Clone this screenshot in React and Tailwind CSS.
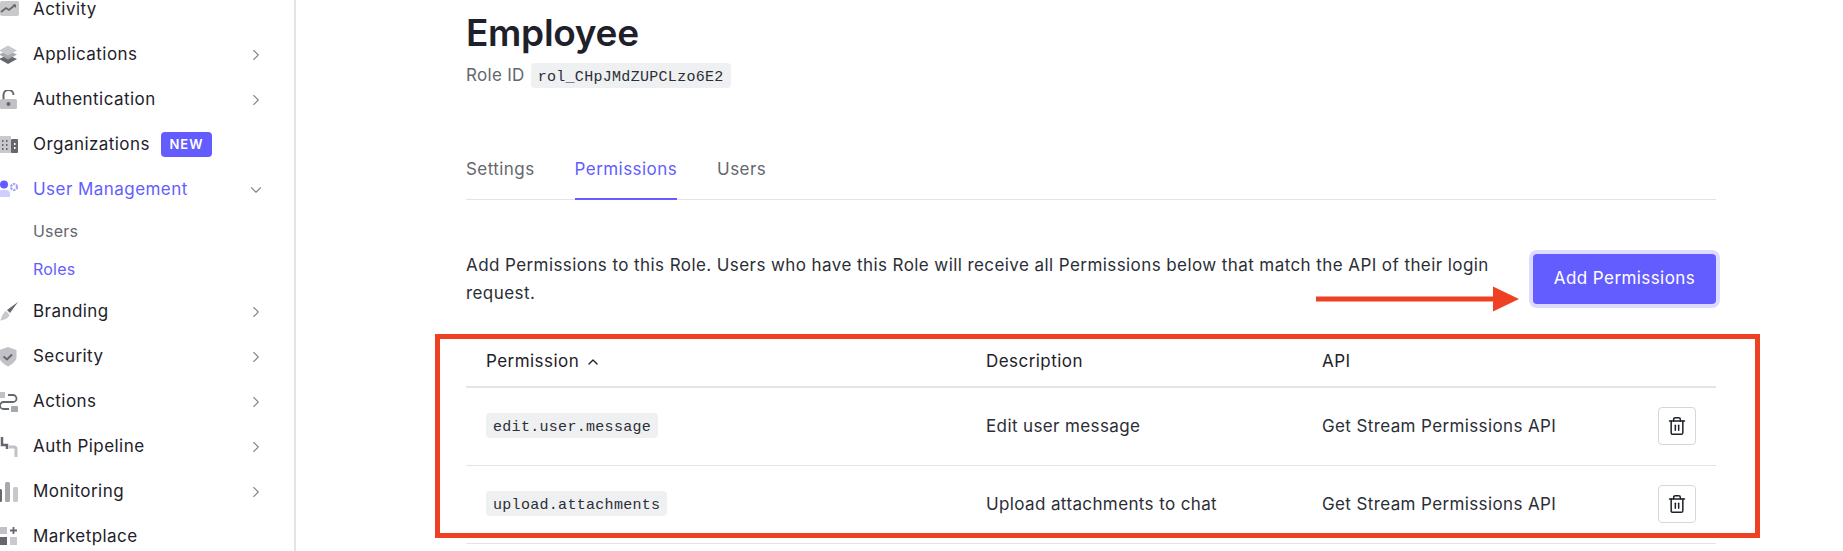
import React from "react";
import { ChevronRight, ChevronDown, ChevronUp, Trash2 } from "lucide-react";

const ActivityIcon = () => (
  <svg width="20" height="20" viewBox="0 0 20 20">
    <rect x="0" y="1" width="19" height="15" rx="2" fill="#c9c9cc" />
    <path d="M1 12l5-4 3 2 6-5" fill="none" stroke="#65676e" strokeWidth="1.8" />
    <path d="M12.5 4.500h3.500v3.500z" fill="#65676e" />
  </svg>
);
const AppsIcon = () => (
  <svg width="20" height="20" viewBox="0 0 20 20">
    <path d="M-1 14l9-4 9 4-9 5z" fill="#65676e" />
    <path d="M-1 9.500l9-4 9 4-9 5z" fill="#a8a9ad" />
    <path d="M-1 5.500l9-5 9 5-9 5z" fill="#c9c9cc" />
  </svg>
);
const LockIcon = () => (
  <svg width="20" height="20" viewBox="0 0 20 20">
    <path d="M3.500 9V5a5 5 0 0 1 10 0" fill="none" stroke="#65676e" strokeWidth="2" />
    <rect x="0" y="9" width="17" height="10" rx="1.500" fill="#c2c2c6" />
    <circle cx="8.500" cy="14" r="2" fill="#65676e" />
  </svg>
);
const OrgIcon = () => (
  <svg width="20" height="20" viewBox="0 0 20 20">
    <rect x="0" y="1" width="11" height="17" fill="#c9c9cc" />
    <rect x="11" y="4" width="7" height="14" rx="1" fill="#65676e" />
    <path d="M2 5h1.500v2H2zM6 5h1.500v2H6zM2 9h1.500v2H2zM6 9h1.500v2H6zM2 13h1.500v2H2zM6 13h1.500v2H6z" fill="#65676e" />
    <path d="M14 8h1.500v2H14zM14 12h1.500v2H14z" fill="#fff" />
  </svg>
);
const UserMgmtIcon = () => (
  <svg width="20" height="20" viewBox="0 0 20 20">
    <circle cx="4" cy="4.500" r="4" fill="#635dff" />
    <path d="M-2 17v-3a4 4 0 0 1 4-4h4a4 4 0 0 1 4 4v3z" fill="#cfcdff" />
    <circle cx="14" cy="7" r="3" fill="none" stroke="#a09dff" strokeWidth="2.200" strokeDasharray="2.200 1" />
  </svg>
);
const BrushIcon = () => (
  <svg width="20" height="20" viewBox="0 0 20 20">
    <path d="M18 0L7 8l3 3z" fill="#65676e" />
    <path d="M6 9l3.500 3.500C9 16 5 18 0 18.500c2-2 1-6 6-9.500z" fill="#c9c9cc" />
  </svg>
);
const ShieldIcon = () => (
  <svg width="20" height="20" viewBox="0 0 20 20">
    <path d="M8 0l8.500 3v7c0 4-4 7-8.500 9.500C3.500 17-.5 14-.5 10V3z" fill="#c2c2c6" />
    <path d="M3.500 9.500l3.500 3 5-5" fill="none" stroke="#65676e" strokeWidth="2" />
  </svg>
);
const ActionsIcon = () => (
  <svg width="20" height="20" viewBox="0 0 20 20">
    <rect x="-1" y="0" width="6" height="6" fill="#c2c2c6" />
    <rect x="11" y="14" width="7" height="7" rx="1" fill="#a8a9ad" />
    <path d="M8 3h5a3.500 3.500 0 0 1 0 7H3.500a3.500 3.500 0 0 0 0 7H9" fill="none" stroke="#65676e" strokeWidth="1.800" />
  </svg>
);
const PipelineIcon = () => (
  <svg width="20" height="20" viewBox="0 0 20 20">
    <path d="M2 0v8h5v4" fill="none" stroke="#65676e" strokeWidth="2.500" />
    <path d="M9 10h5a2 2 0 0 1 2 2v8" fill="none" stroke="#c2c2c6" strokeWidth="3" />
  </svg>
);
const ChartIcon = () => (
  <svg width="20" height="20" viewBox="0 0 20 20">
    <rect x="-1" y="7" width="3" height="13" rx="1.500" fill="#65676e" />
    <rect x="5" y="0" width="5" height="20" rx="1.500" fill="#a8a9ad" />
    <rect x="13" y="5" width="5" height="15" rx="1.500" fill="#c9c9cc" />
  </svg>
);
const MarketIcon = () => (
  <svg width="20" height="20" viewBox="0 0 20 20">
    <rect x="0" y="0" width="7" height="7" fill="#c2c2c6" />
    <rect x="0" y="10" width="7" height="8" fill="#65676e" />
    <rect x="10" y="10" width="7" height="8" fill="#c9c9cc" />
    <path d="M13.500 0v7M10 3.500h7" stroke="#65676e" strokeWidth="1.800" />
  </svg>
);

const NavItem = ({ icon, label, chevron = true, badge, active }) => (
  <div className="flex h-[45px] items-center">
    <div className="flex w-[33px] shrink-0 items-center">{icon}</div>
    <span className={`text-[17px] font-[420] tracking-[0.45px] ${active ? "text-[#635dff]" : "text-[#1e212a]"}`}>
      {label}
    </span>
    {badge && (
      <span className="ml-[11px] flex h-[25px] w-[51px] items-center justify-center rounded-[4px] bg-[#635dff] text-[13px] font-semibold tracking-[1px] text-white">
        {badge}
      </span>
    )}
    {chevron && (
      <span className="ml-auto mr-[29px] text-[#85878c]">
        {active ? <ChevronDown size={18} strokeWidth={1.5} /> : <ChevronRight size={18} strokeWidth={1.5} />}
      </span>
    )}
  </div>
);

const Sidebar = () => (
  <aside className="h-[551px] w-[296px] shrink-0 overflow-hidden border-r-2 border-[#e3e4e6]">
    <div className="-mt-[13px]">
      <NavItem icon={<ActivityIcon />} label="Activity" chevron={false} />
      <NavItem icon={<AppsIcon />} label="Applications" />
      <NavItem icon={<LockIcon />} label="Authentication" />
      <NavItem icon={<OrgIcon />} label="Organizations" chevron={false} badge="NEW" />
      <NavItem icon={<UserMgmtIcon />} label="User Management" active />
      <div className="pb-[1px] pl-[33px] text-[16px] tracking-[0.2px]">
        <div className="flex h-[38px] items-center text-[#65676e]">Users</div>
        <div className="flex h-[38px] items-center text-[#635dff]">Roles</div>
      </div>
      <NavItem icon={<BrushIcon />} label="Branding" />
      <NavItem icon={<ShieldIcon />} label="Security" />
      <NavItem icon={<ActionsIcon />} label="Actions" />
      <NavItem icon={<PipelineIcon />} label="Auth Pipeline" />
      <NavItem icon={<ChartIcon />} label="Monitoring" />
      <NavItem icon={<MarketIcon />} label="Marketplace" chevron={false} />
    </div>
  </aside>
);

const Code = ({ children }) => (
  <code className="inline-block rounded-[4px] bg-[#eff0f2] px-[7px] pt-[5px] pb-[1px] font-['Liberation_Mono',monospace] text-[15px] leading-[19px] tracking-[0.3px] text-[#2b2e36]">
    {children}
  </code>
);

const Row = ({ name, desc }) => (
  <div className="flex h-[78px] items-center border-b border-[#e3e4e6] text-[17px] tracking-[0.38px] text-[#2b2e36]">
    <div className="w-[520px] pl-5"><Code>{name}</Code></div>
    <div className="w-[336px] pt-[2px]">{desc}</div>
    <div className="flex-1 pt-[2px]">Get Stream Permissions API</div>
    <button className="mr-5 flex h-[38px] w-[38px] items-center justify-center rounded-[4px] border border-[#d5d6d9] bg-white text-[#1e212a]">
      <Trash2 size={20} strokeWidth={1.8} />
    </button>
  </div>
);

export default function App() {
  return (
    <div className="relative flex h-[551px] w-[1843px] overflow-hidden bg-white font-['Inter',sans-serif]">
      <Sidebar />
      <main className="ml-[170px] w-[1250px]">
        <h1 className="mt-[11px] text-[37px] leading-[44px] font-semibold tracking-[-0.3px] text-[#1e212a]">Employee</h1>
        <div className="mt-[8px] flex items-center gap-[6px] text-[17px] tracking-[0.3px] text-[#65676e]">
          Role ID <Code>rol_CHpJMdZUPCLzo6E2</Code>
        </div>

        <div className="mt-[60px] flex h-[51px] gap-[40px] border-b border-[#e3e4e6] text-[17px] leading-6 tracking-[0.44px] text-[#65676e]">
          <span className="pt-[8px]">Settings</span>
          <span className="-mb-px border-b-2 border-[#635dff] pt-[8px] text-[#635dff]">Permissions</span>
          <span className="pt-[8px]">Users</span>
        </div>

        <div className="mt-[51px] flex items-start justify-between">
          <p className="w-[1040px] text-[17px] leading-[28px] tracking-[0.42px] text-[#2b2e36]">
            Add Permissions to this Role. Users who have this Role will receive all Permissions below that match the API of their login request.
          </p>
          <button className="mt-[3px] h-[50px] w-[183px] rounded-[4px] bg-[#635dff] pt-[1px] text-[17px] font-normal tracking-[0.42px] text-white ring-4 ring-[#dcdaff]">
            Add Permissions
          </button>
        </div>

        <div className="mt-[28px] flex h-[53px] items-center border-b-2 border-[#e3e4e6] pt-[4px] text-[17px] font-[420] tracking-[0.45px] text-[#1e212a]">
          <div className="flex w-[520px] items-center gap-[6px] pl-5">
            Permission <ChevronUp size={16} strokeWidth={2} />
          </div>
          <div className="w-[336px]">Description</div>
          <div>API</div>
        </div>
        <Row name="edit.user.message" desc="Edit user message" />
        <Row name="upload.attachments" desc="Upload attachments to chat" />
      </main>

      {/* annotations drawn over the screenshot */}
      <div className="absolute top-[334px] left-[435px] h-[204px] w-[1325px] border-[5px] border-[#ee4023]" />
      <svg className="absolute top-[285px] left-[1316px]" width="204" height="28" viewBox="0 0 204 28">
        <path d="M0 14H178" stroke="#ee4023" strokeWidth="5" />
        <path d="M177 1.500L203 14 177 26.500z" fill="#ee4023" />
      </svg>
    </div>
  );
}
